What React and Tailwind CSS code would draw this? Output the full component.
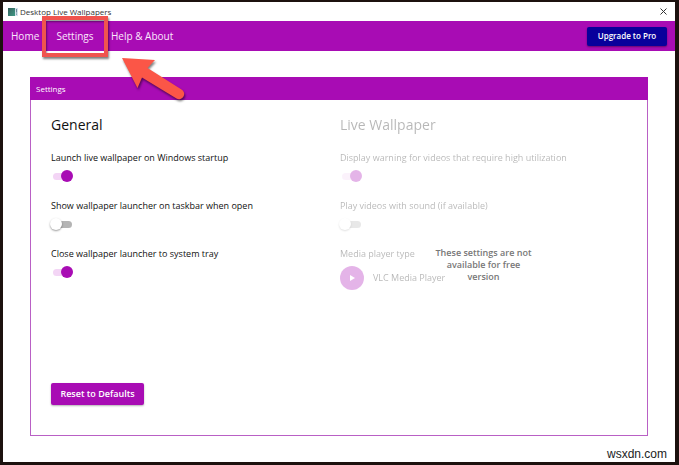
import React from "react";

function Toggle({ id, label, on = false, disabled = false }) {
  return (
    <div className="flex h-12 flex-col items-start">
      <label htmlFor={id} className="text-[9px] leading-4 whitespace-nowrap">
        {label}
      </label>
      <input
        id={id}
        type="checkbox"
        role="switch"
        defaultChecked={on}
        disabled={disabled}
        className="relative mt-1 h-3 w-6 appearance-none before:absolute before:top-[3px] before:left-[2px] before:h-[7px] before:w-[19px] before:rounded-full before:bg-[#b4b4b4] before:content-[''] after:absolute after:top-0 after:left-[-1px] after:size-3 after:rounded-full after:bg-white after:shadow-[0_1px_2px_rgba(0,0,0,0.4)] after:content-[''] checked:before:bg-[#f3d5f5] checked:after:left-[10px] checked:after:bg-[#a80cb4] checked:after:shadow-none"
      />
    </div>
  );
}

function AppIcon() {
  return (
    <svg className="h-2 w-[10px]" viewBox="0 0 10 8" aria-hidden="true">
      <defs>
        <linearGradient id="appIcon" x1="0" y1="0" x2="1" y2="1">
          <stop offset="0" stopColor="#35605c" />
          <stop offset="1" stopColor="#3f9a86" />
        </linearGradient>
      </defs>
      <rect width="7" height="8" fill="url(#appIcon)" />
      <rect x="7" width="3" height="8" fill="#d3e3ec" />
      <path d="M8.5 1v3.5M8.5 5.5v1.2" stroke="#6d8799" strokeWidth="1" />
    </svg>
  );
}

function Arrow() {
  return (
    <svg
      className="pointer-events-none absolute top-[34px] left-[74px] z-10 h-[50px] w-[72px] drop-shadow-[1px_2px_1px_rgba(0,0,0,0.5)]"
      viewBox="0 0 72 50"
      aria-hidden="true"
    >
      <path
        d="M6 3 L39 5 L31.500 13 L65.500 34.500 A5 5 0 0 1 60.500 43.500 L26 22.500 L21.500 33 Z"
        fill="#fb5647"
      />
    </svg>
  );
}

export default function App() {
  return (
    <div className="flex min-h-screen flex-col bg-[#1c110e] pt-[2px] pr-1 pb-[3px] pl-[3px] font-['Open_Sans','Noto_Sans',sans-serif] text-[#111]">
      <main className="relative flex flex-1 flex-col bg-white">
        <header className="flex h-[19px] items-center pr-[7px] pl-[5px]">
          <AppIcon />
          <h1 className="ml-[2px] text-[8px] leading-4 text-[#333]">Desktop Live Wallpapers</h1>
          <button type="button" aria-label="Close" className="ml-auto p-px">
            <svg className="size-[7px]" viewBox="0 0 7 7" aria-hidden="true">
              <path d="M.5.5l6 6M6.500.5l-6 6" stroke="#333" strokeWidth="1" />
            </svg>
          </button>
        </header>

        <nav className="flex h-[30px] items-center bg-[#a80cb4] pr-2 pl-2 text-[10px] text-[#fbe6fc]">
          <a href="#home" className="w-[31px]">Home</a>
          <div className="relative flex h-full w-[66px] items-center justify-center">
            <a href="#settings" className="flex h-full items-center">Settings</a>
            <span className="absolute -top-[5px] left-0 h-[41px] w-[66px] border-4 border-[#f0544e] shadow-[1px_2px_2px_rgba(0,0,0,0.5),inset_1px_2px_2px_rgba(0,0,0,0.4)]" />
            <Arrow />
          </div>
          <a href="#help" className="ml-[3px] whitespace-nowrap">Help &amp; About</a>
          <button
            type="button"
            className="ml-auto h-[19px] w-20 rounded-[2px] bg-[#08009b] text-[8px] font-semibold text-white shadow-[0_1px_2px_rgba(0,0,0,0.4)]"
          >
            Upgrade to Pro
          </button>
        </nav>

        <section className="mt-[26px] mr-[27px] mb-[26px] ml-[27px] flex flex-1 flex-col border border-[#b960c5]">
          <h2 className="-mx-px -mt-px h-[23px] bg-[#a80cb4] pl-[6px] text-[8px] leading-[23px] text-white">
            Settings
          </h2>
          <div className="grid flex-1 grid-cols-2 gap-x-[2px] pt-[13px] pr-5 pb-[30px] pl-5">
            <div className="flex flex-col items-start">
              <h3 className="text-[14px] leading-6">General</h3>
              <div className="mt-[13px]">
                <Toggle id="startup" label="Launch live wallpaper on Windows startup" on />
                <Toggle id="taskbar" label="Show wallpaper launcher on taskbar when open" />
                <Toggle id="tray" label="Close wallpaper launcher to system tray" on />
              </div>
              <button
                type="button"
                className="mt-auto h-[22px] w-[93px] rounded-[2px] bg-[#a80cb4] text-[9px] font-semibold text-white shadow-[0_1px_2px_rgba(0,0,0,0.3)]"
              >
                Reset to Defaults
              </button>
            </div>

            <div className="relative">
              <div className="opacity-30">
                <h3 className="text-[14px] leading-6">Live Wallpaper</h3>
                <div className="mt-[13px]">
                  <Toggle id="warning" label="Display warning for videos that require high utilization" on disabled />
                  <Toggle id="sound" label="Play videos with sound (if available)" disabled />
                </div>
                <p className="text-[9px] leading-4">Media player type</p>
                <div className="mt-1 flex items-center text-[9px]">
                  <button
                    type="button"
                    disabled
                    aria-label="Play"
                    className="flex size-6 items-center justify-center rounded-full bg-[#a80cb4]"
                  >
                    <svg className="size-[6px]" viewBox="0 0 6 6" aria-hidden="true">
                      <path d="M1 0l5 3-5 3z" fill="#fff" />
                    </svg>
                  </button>
                  <span className="ml-[9px]">VLC Media Player</span>
                </div>
              </div>
              <p className="absolute top-[134px] left-1/2 flex w-[100px] -translate-x-1/2 flex-col items-center text-[9px] leading-3 font-semibold whitespace-nowrap text-[#777]">
                <span>These settings are not </span>
                <span>available for free </span>
                <span>version</span>
              </p>
            </div>
          </div>
        </section>
        <small className="absolute right-2 bottom-0 font-['Liberation_Sans',Arial,sans-serif] text-[12px] leading-4 text-[#222]">
          wsxdn.com
        </small>
      </main>
    </div>
  );
}
